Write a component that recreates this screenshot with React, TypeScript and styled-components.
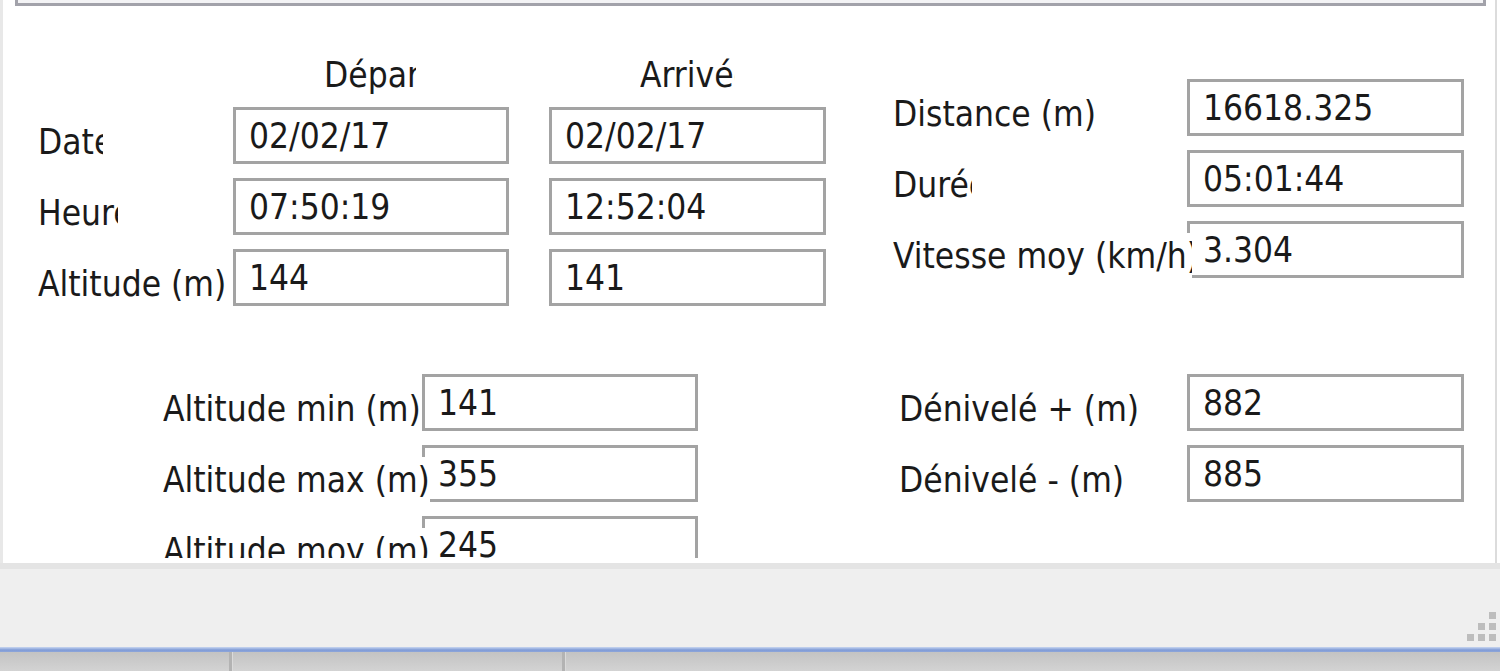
import React from 'react';
import styled, { createGlobalStyle } from 'styled-components';

const GlobalStyle = createGlobalStyle`
  html, body {
    margin: 0;
    padding: 0;
    background: #d0d0d0;
  }
  body {
    font-family: "DejaVu Sans Condensed", "DejaVu Sans", sans-serif;
  }
`;

const Window = styled.div`
  width: 1500px;
  height: 671px;
  display: flex;
  flex-direction: column;
  overflow: hidden;
  background: #efefef;
`;

const Body = styled.div`
  display: flex;
  background: #fff;
`;

const Panel = styled.div`
  flex: 1;
  margin-right: 3px;
  height: 563px;
  box-sizing: border-box;
  background: #fff;
  border-left: 3px solid #e8e8e8;
  border-right: 2px solid #dcdcdc;
`;

const Content = styled.div`
  height: 558px;
  overflow: hidden;
`;

const TopFrame = styled.div`
  height: 3px;
  margin: 0 9px 0 12px;
  background: #f3f3f5;
  border: 3px solid #a2a2aa;
  border-top: none;
`;

const Section = styled.div<{ $top: number; $left: number }>`
  display: flex;
  align-items: flex-start;
  margin-top: ${p => p.$top}px;
  padding-left: ${p => p.$left}px;
`;

const FormGrid = styled.div<{ $cols: string; $top?: number; $left?: number; $gap?: number }>`
  display: grid;
  grid-template-columns: ${p => p.$cols};
  column-gap: ${p => p.$gap ?? 0}px;
  row-gap: 13px;
  margin-top: ${p => p.$top ?? 0}px;
  margin-left: ${p => p.$left ?? 0}px;
`;

const Header = styled.div<{ $w: number }>`
  margin-left: 91px;
  width: ${p => p.$w}px;
  height: 38px;
  line-height: 38px;
  overflow: hidden;
  white-space: nowrap;
  font-size: 35px;
  color: #1a1a1a;
`;

const Label = styled.span<{ $w?: number }>`
  justify-self: start;
  align-self: center;
  width: ${p => (p.$w ? `${p.$w}px` : 'max-content')};
  height: 46px;
  line-height: 46px;
  margin-top: 12px;
  overflow: hidden;
  white-space: nowrap;
  background: #fff;
  position: relative;
  z-index: 1;
  font-size: 35px;
  color: #1a1a1a;
`;

const Field = styled.input`
  display: block;
  width: 100%;
  height: 57px;
  margin: 0;
  box-sizing: border-box;
  border: 3px solid #a3a3a3;
  padding: 0 0 0 13px;
  background: #fff;
  outline: none;
  font-family: "DejaVu Sans Condensed", "DejaVu Sans", sans-serif;
  font-size: 35px;
  color: #1a1a1a;
`;

const StatusBar = styled.div`
  height: 84px;
  box-sizing: border-box;
  border-top: 6px solid #e4e4e4;
  background: #efefef;
  display: flex;
  justify-content: flex-end;
  align-items: flex-end;
  padding: 0 3px 5px 0;
`;

const BlueLine = styled.div`
  height: 5px;
  background: linear-gradient(#c9d7f0, #7f9bd7 60%, #8ea6d9);
`;

const Taskbar = styled.div`
  flex: 1;
  display: flex;
  background: linear-gradient(#c3c3c3, #d3d3d3);
`;

const TaskSlot = styled.div<{ $w: number }>`
  width: ${p => p.$w}px;
  border-right: 3px solid #b3b3b3;
  box-shadow: 1px 0 0 #dadada;
`;

const Grip = () => (
  <svg width="30" height="30" viewBox="0 0 30 30">
    {[
      [22, 0],
      [11, 11],
      [22, 11],
      [0, 22],
      [11, 22],
      [22, 22],
    ].map(([x, y]) => (
      <rect key={`${x}-${y}`} x={x} y={y} width="7" height="7" fill="#bdbdbd" />
    ))}
  </svg>
);

interface RowProps {
  label: string;
  width?: number;
  values: string[];
}

const Row: React.FC<RowProps> = ({ label, width, values }) => (
  <>
    <Label $w={width}>{label}</Label>
    {values.map((v, i) => (
      <Field key={i} readOnly defaultValue={v} />
    ))}
  </>
);

const tripRows: RowProps[] = [
  { label: 'Date', width: 65, values: ['02/02/17', '02/02/17'] },
  { label: 'Heure', width: 80, values: ['07:50:19', '12:52:04'] },
  { label: 'Altitude (m)', values: ['144', '141'] },
];

const statRows: RowProps[] = [
  { label: 'Distance (m)', values: ['16618.325'] },
  { label: 'Durée', width: 79, values: ['05:01:44'] },
  { label: 'Vitesse moy (km/h)', width: 299, values: ['3.304'] },
];

const altRows: RowProps[] = [
  { label: 'Altitude min (m)', values: ['141'] },
  { label: 'Altitude max (m)', values: ['355'] },
  { label: 'Altitude moy (m)', values: ['245'] },
];

const denivRows: RowProps[] = [
  { label: 'Dénivelé + (m)', values: ['882'] },
  { label: 'Dénivelé - (m)', values: ['885'] },
];

export default function App() {
  return (
    <>
      <GlobalStyle />
      <Window>
        <Body>
          <Panel>
            <Content>
              <TopFrame />
              <Section $top={0} $left={35}>
                <FormGrid $cols="155px 276px 277px" $gap={40} $top={50}>
                  <span />
                  <Header $w={92}>Départ</Header>
                  <Header $w={95}>Arrivée</Header>
                  {tripRows.map(r => (
                    <Row key={r.label} {...r} />
                  ))}
                </FormGrid>
                <FormGrid $cols="294px 277px" $top={73} $left={67}>
                  {statRows.map(r => (
                    <Row key={r.label} {...r} />
                  ))}
                </FormGrid>
              </Section>
              <Section $top={67} $left={160}>
                <FormGrid $cols="259px 276px">
                  {altRows.map(r => (
                    <Row key={r.label} {...r} />
                  ))}
                </FormGrid>
                <FormGrid $cols="288px 277px" $left={201}>
                  {denivRows.map(r => (
                    <Row key={r.label} {...r} />
                  ))}
                </FormGrid>
              </Section>
            </Content>
          </Panel>
        </Body>
        <StatusBar>
          <Grip />
        </StatusBar>
        <BlueLine />
        <Taskbar>
          <TaskSlot $w={229} />
          <TaskSlot $w={330} />
        </Taskbar>
      </Window>
    </>
  );
}
